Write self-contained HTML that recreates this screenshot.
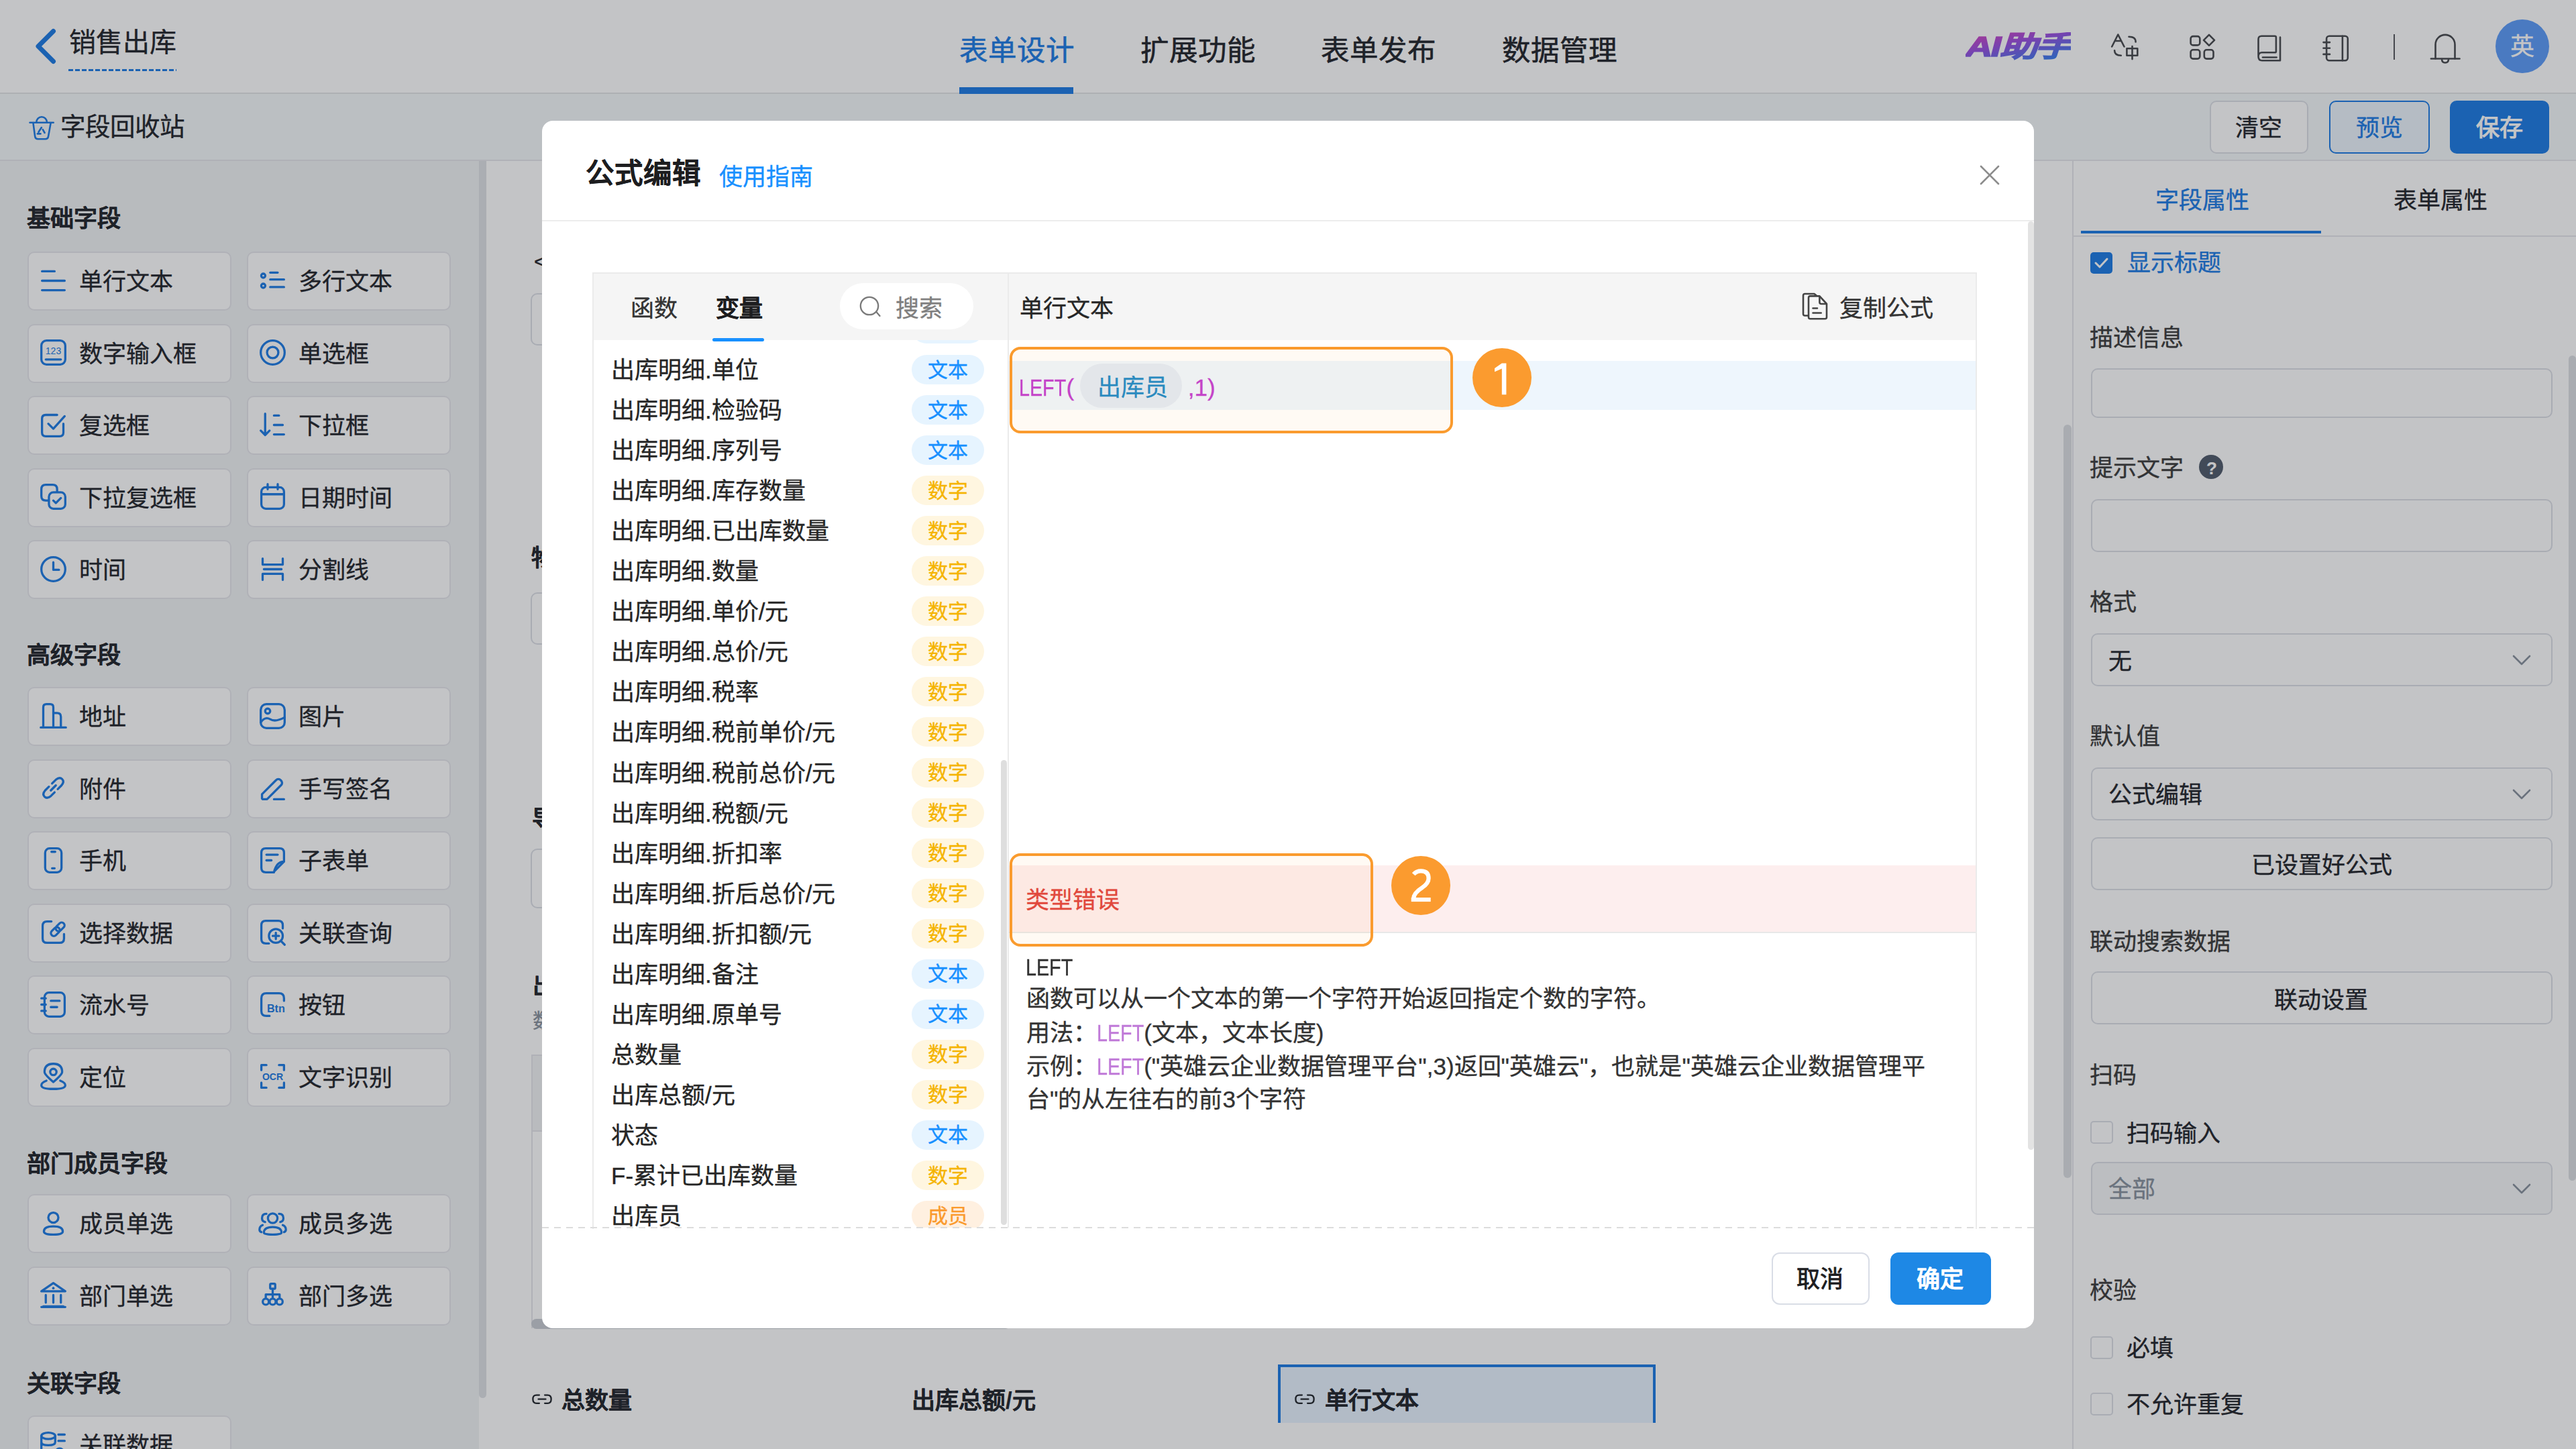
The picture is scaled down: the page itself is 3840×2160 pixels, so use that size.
<!DOCTYPE html><html lang="zh-CN"><head><meta charset="utf-8"><style>
html,body{margin:0;padding:0;width:3840px;height:2160px;overflow:hidden;background:#fff;}
body{font-family:"Liberation Sans",sans-serif;position:relative;}
.t{position:absolute;white-space:nowrap;line-height:1;-webkit-text-stroke:0.35px currentColor;}
.n{display:inline-block;transform-origin:0 50%;}
.r{position:absolute;box-sizing:border-box;}
</style></head><body>
<div class="r" style="left:0px;top:0px;width:3840px;height:138px;background:#ffffff;"></div>
<div class="r" style="left:0px;top:138px;width:3840px;height:2px;background:#e3e4e6;"></div>
<svg class="r" style="left:40px;top:35px;" width="60" height="70" viewBox="0 0 60 70" fill="none"><polyline points="39.5,11.5 17,34 39.5,56.5" stroke="#1b7ae4" stroke-width="7" stroke-linecap="round" stroke-linejoin="round"/></svg>
<div class="t" style="left:103px;top:43.0px;font-size:40px;color:#1f2329;font-weight:400;">销售出库</div>
<div class="r" style="left:102px;top:103px;width:161px;height:3px;background:repeating-linear-gradient(90deg,#1b7ae4 0 7px,transparent 7px 10px);"></div>
<div class="t" style="left:1430px;top:54.75px;font-size:42.5px;color:#1b7ae4;font-weight:400;-webkit-text-stroke:0.6px currentColor;">表单设计</div>
<div class="r" style="left:1430px;top:130px;width:170px;height:10px;background:#1b7ae4;"></div>
<div class="t" style="left:1700px;top:54.75px;font-size:42.5px;color:#1f2329;font-weight:400;-webkit-text-stroke:0.6px currentColor;">扩展功能</div>
<div class="t" style="left:1969px;top:54.75px;font-size:42.5px;color:#1f2329;font-weight:400;-webkit-text-stroke:0.6px currentColor;">表单发布</div>
<div class="t" style="left:2239px;top:54.75px;font-size:42.5px;color:#1f2329;font-weight:400;-webkit-text-stroke:0.6px currentColor;">数据管理</div>
<div class="t" style="left:2930px;top:48px;font-size:43px;font-weight:900;font-style:italic;letter-spacing:-2px;transform:scaleX(1.3);transform-origin:0 0;-webkit-text-stroke:1.6px transparent;background:linear-gradient(165deg,#e040b8 0%,#9a4ee0 40%,#3d78ee 85%);-webkit-background-clip:text;background-clip:text;color:transparent;">AI助手</div>
<svg class="r" style="left:3146px;top:50px;" width="44" height="42" viewBox="0 0 44 42" fill="none"><path d="M2.2 19.5 L11.3 1.5 L20.5 19.5 M6.6 11 H16" stroke="#45474c" stroke-width="2.6" stroke-linecap="round" stroke-linejoin="round"/><path d="M27.5 4.8 Q37.6 4.8 37.6 12.5" stroke="#45474c" stroke-width="2.6" stroke-linecap="round" stroke-linejoin="round"/><path d="M6.1 25.3 Q6.1 32.7 15.8 32.7" stroke="#45474c" stroke-width="2.6" stroke-linecap="round" stroke-linejoin="round"/><rect x="24.4" y="22.2" width="15.9" height="10.5" stroke="#45474c" stroke-width="2.6" stroke-linecap="round" stroke-linejoin="round" stroke-linecap="butt" stroke-linejoin="miter"/><path d="M32.5 19.1 V38.1" stroke="#45474c" stroke-width="2.6" stroke-linecap="round" stroke-linejoin="round"/></svg>
<svg class="r" style="left:3262px;top:50px;" width="44" height="42" viewBox="0 0 44 42" fill="none"><rect x="3.6" y="4.1" width="13.7" height="13.3" rx="3.5" stroke="#45474c" stroke-width="2.6" stroke-linecap="round" stroke-linejoin="round"/><rect x="3.6" y="24.3" width="13.7" height="13.3" rx="3.5" stroke="#45474c" stroke-width="2.6" stroke-linecap="round" stroke-linejoin="round"/><rect x="23.8" y="24.3" width="13.7" height="13.3" rx="3.5" stroke="#45474c" stroke-width="2.6" stroke-linecap="round" stroke-linejoin="round"/><path d="M31 1.8 L39 9.8 L31 17.8 L23 9.8 Z" stroke="#45474c" stroke-width="2.6" stroke-linecap="round" stroke-linejoin="round"/></svg>
<svg class="r" style="left:3362px;top:50px;" width="44" height="44" viewBox="0 0 44 44" fill="none"><path d="M4.5 34 V8.5 Q4.5 3.8 9.2 3.8 H29 Q30.9 3.8 30.9 5.7 V26.4 Q30.9 28.3 29 28.3 H10 Q4.5 28.3 4.5 34.2 Q4.5 40.2 10 40.2 H37 V5.5" stroke="#45474c" stroke-width="2.6" stroke-linecap="round" stroke-linejoin="round"/><path d="M11 35.5 H31.6" stroke="#45474c" stroke-width="2.6" stroke-linecap="round" stroke-linejoin="round"/></svg>
<svg class="r" style="left:3460px;top:50px;" width="44" height="44" viewBox="0 0 44 44" fill="none"><rect x="8.1" y="3.8" width="31.7" height="36.4" rx="4" stroke="#45474c" stroke-width="2.6" stroke-linecap="round" stroke-linejoin="round"/><path d="M31.9 3.8 V40.2" stroke="#45474c" stroke-width="2.6" stroke-linecap="round" stroke-linejoin="round"/><path d="M3.5 13.1 H13 M3.5 21.7 H13 M3.5 30.9 H13" stroke="#45474c" stroke-width="2.6" stroke-linecap="round" stroke-linejoin="round"/></svg>
<div class="r" style="left:3568px;top:51px;width:2px;height:38px;background:#55575c;"></div>
<svg class="r" style="left:3620px;top:49px;" width="50" height="48" viewBox="0 0 50 48" fill="none"><path d="M10.5 38.5 V17.4 A14.5 14.5 0 0 1 39.5 17.4 V38.5" stroke="#45474c" stroke-width="2.6" stroke-linecap="round" stroke-linejoin="round"/><path d="M3.9 38.5 H46.5" stroke="#45474c" stroke-width="2.6" stroke-linecap="round" stroke-linejoin="round"/><path d="M20 39 Q20 44.5 25 44.5 Q30 44.5 30 39" stroke="#45474c" stroke-width="2.6" stroke-linecap="round" stroke-linejoin="round"/></svg>
<div class="r" style="left:3720px;top:29px;width:80px;height:80px;border-radius:50%;background:#5a9af8;"></div>
<div class="t" style="left:3742px;top:51.5px;font-size:36px;color:#ffffff;font-weight:400;">英</div>
<div class="r" style="left:0px;top:140px;width:3840px;height:98px;background:#f5f8fa;"></div>
<div class="r" style="left:0px;top:238px;width:3840px;height:2px;background:#e5e6eb;"></div>
<svg class="r" style="left:42px;top:170px;" width="40" height="42" viewBox="0 0 40 42" fill="none"><path d="M2.5 12.8 H37.7" stroke="#1b7ae4" stroke-width="2.6" stroke-linecap="round"/><path d="M12.2 12.8 A7.9 8.6 0 0 1 28 12.8" stroke="#1b7ae4" stroke-width="2.6"/><path d="M7.5 13.6 L10.2 33.5 Q10.7 37.2 14.5 37.2 H25.7 Q29.5 37.2 30 33.5 L33.6 13.6" stroke="#1b7ae4" stroke-width="2.6" stroke-linejoin="round"/><path d="M19.9 20 L15.5 26.8 M13.8 29.4 H18.5 M21.8 23.2 L24.6 28" stroke="#1b7ae4" stroke-width="2.6" stroke-linecap="round"/></svg>
<div class="t" style="left:90px;top:171.25px;font-size:37.5px;color:#1f2329;font-weight:400;">字段回收站</div>
<div class="r" style="left:3294px;top:150px;width:147px;height:79px;border:2px solid #dcdfe6;border-radius:10px;background:#fff;"></div>
<div class="t" style="left:3332px;top:172.5px;font-size:35px;color:#1f2329;font-weight:400;">清空</div>
<div class="r" style="left:3472px;top:150px;width:150px;height:79px;border:2px solid #1b7ae4;border-radius:10px;background:#ecf4fd;"></div>
<div class="t" style="left:3512px;top:172.5px;font-size:35px;color:#1b7ae4;font-weight:400;">预览</div>
<div class="r" style="left:3652px;top:150px;width:148px;height:79px;border-radius:10px;background:#1b7ae4;"></div>
<div class="t" style="left:3691px;top:172.5px;font-size:35px;color:#ffffff;font-weight:400;-webkit-text-stroke:1.2px currentColor;">保存</div>
<div class="r" style="left:0px;top:240px;width:714px;height:1920px;background:#f1f3f5;"></div>
<div class="r" style="left:714px;top:240px;width:11px;height:1844px;background:#dfe1e5;border-radius:0 0 6px 6px;"></div>
<div class="t" style="left:40px;top:307.5px;font-size:35px;color:#1f2329;font-weight:700;-webkit-text-stroke:0.1px currentColor;">基础字段</div>
<div class="r" style="left:41px;top:375.0px;width:304px;height:88px;border:2px solid #e5e6eb;border-radius:10px;background:#ffffff;"></div>
<svg class="r" style="left:56.5px;top:395.5px;" width="45" height="45" viewBox="0 0 24 24" fill="none"><path d="M3 4.5 H13 M3 12 H21 M3 19.5 H21" stroke="#1b7ae4" stroke-width="1.75" stroke-linecap="round" stroke-linejoin="round"/></svg>
<div class="t" style="left:118px;top:402.0px;font-size:35px;color:#1f2329;font-weight:400;">单行文本</div>
<div class="r" style="left:368px;top:375.0px;width:304px;height:88px;border:2px solid #e5e6eb;border-radius:10px;background:#ffffff;"></div>
<svg class="r" style="left:383.5px;top:395.5px;" width="45" height="45" viewBox="0 0 24 24" fill="none"><circle cx="4.5" cy="8" r="1.6" stroke="#1b7ae4" stroke-width="1.75" stroke-linecap="round" stroke-linejoin="round"/><circle cx="4.5" cy="16" r="1.6" stroke="#1b7ae4" stroke-width="1.75" stroke-linecap="round" stroke-linejoin="round"/><path d="M10 5.5 H16 M10 11 H21 M10 17 H21" stroke="#1b7ae4" stroke-width="1.75" stroke-linecap="round" stroke-linejoin="round"/></svg>
<div class="t" style="left:445px;top:402.0px;font-size:35px;color:#1f2329;font-weight:400;">多行文本</div>
<div class="r" style="left:41px;top:482.5px;width:304px;height:88px;border:2px solid #e5e6eb;border-radius:10px;background:#ffffff;"></div>
<svg class="r" style="left:56.5px;top:503.0px;" width="45" height="45" viewBox="0 0 24 24" fill="none"><rect x="2.5" y="2.5" width="19" height="19" rx="4" stroke="#1b7ae4" stroke-width="1.75" stroke-linecap="round" stroke-linejoin="round"/><path d="M6 17.5 H18" stroke="#1b7ae4" stroke-width="1.75" stroke-linecap="round" stroke-linejoin="round"/><text x="12" y="13.5" font-size="7.5" text-anchor="middle" fill="#1b7ae4" font-family="Liberation Sans">123</text></svg>
<div class="t" style="left:118px;top:509.5px;font-size:35px;color:#1f2329;font-weight:400;">数字输入框</div>
<div class="r" style="left:368px;top:482.5px;width:304px;height:88px;border:2px solid #e5e6eb;border-radius:10px;background:#ffffff;"></div>
<svg class="r" style="left:383.5px;top:503.0px;" width="45" height="45" viewBox="0 0 24 24" fill="none"><circle cx="12" cy="12" r="9.5" stroke="#1b7ae4" stroke-width="1.75" stroke-linecap="round" stroke-linejoin="round"/><circle cx="12" cy="12" r="4.5" stroke="#1b7ae4" stroke-width="1.75" stroke-linecap="round" stroke-linejoin="round"/></svg>
<div class="t" style="left:445px;top:509.5px;font-size:35px;color:#1f2329;font-weight:400;">单选框</div>
<div class="r" style="left:41px;top:590.0px;width:304px;height:88px;border:2px solid #e5e6eb;border-radius:10px;background:#ffffff;"></div>
<svg class="r" style="left:56.5px;top:610.5px;" width="45" height="45" viewBox="0 0 24 24" fill="none"><path d="M20 11 V18 Q20 21 17 21 H6 Q3 21 3 18 V7 Q3 4 6 4 H15" stroke="#1b7ae4" stroke-width="1.75" stroke-linecap="round" stroke-linejoin="round"/><path d="M8 11 L12 15 L21 5" stroke="#1b7ae4" stroke-width="1.75" stroke-linecap="round" stroke-linejoin="round"/></svg>
<div class="t" style="left:118px;top:617.0px;font-size:35px;color:#1f2329;font-weight:400;">复选框</div>
<div class="r" style="left:368px;top:590.0px;width:304px;height:88px;border:2px solid #e5e6eb;border-radius:10px;background:#ffffff;"></div>
<svg class="r" style="left:383.5px;top:610.5px;" width="45" height="45" viewBox="0 0 24 24" fill="none"><path d="M6 3 V20 M2.5 16.5 L6 20 L9.5 16.5" stroke="#1b7ae4" stroke-width="1.75" stroke-linecap="round" stroke-linejoin="round"/><path d="M13 4.5 H17 M13 12 H20 M13 19.5 H21" stroke="#1b7ae4" stroke-width="1.75" stroke-linecap="round" stroke-linejoin="round"/></svg>
<div class="t" style="left:445px;top:617.0px;font-size:35px;color:#1f2329;font-weight:400;">下拉框</div>
<div class="r" style="left:41px;top:697.5px;width:304px;height:88px;border:2px solid #e5e6eb;border-radius:10px;background:#ffffff;"></div>
<svg class="r" style="left:56.5px;top:718.0px;" width="45" height="45" viewBox="0 0 24 24" fill="none"><path d="M15 8 V6 Q15 2.5 11.5 2.5 H6 Q2.5 2.5 2.5 6 V11.5 Q2.5 15 6 15 H8" stroke="#1b7ae4" stroke-width="1.75" stroke-linecap="round" stroke-linejoin="round"/><rect x="8.5" y="8.5" width="13" height="13" rx="3.5" stroke="#1b7ae4" stroke-width="1.75" stroke-linecap="round" stroke-linejoin="round"/><path d="M12 15 L14 17 L18 13" stroke="#1b7ae4" stroke-width="1.75" stroke-linecap="round" stroke-linejoin="round"/></svg>
<div class="t" style="left:118px;top:724.5px;font-size:35px;color:#1f2329;font-weight:400;">下拉复选框</div>
<div class="r" style="left:368px;top:697.5px;width:304px;height:88px;border:2px solid #e5e6eb;border-radius:10px;background:#ffffff;"></div>
<svg class="r" style="left:383.5px;top:718.0px;" width="45" height="45" viewBox="0 0 24 24" fill="none"><rect x="3" y="4.5" width="18" height="17" rx="3.5" stroke="#1b7ae4" stroke-width="1.75" stroke-linecap="round" stroke-linejoin="round"/><path d="M3 10 H21 M8 2 V6 M16 2 V6" stroke="#1b7ae4" stroke-width="1.75" stroke-linecap="round" stroke-linejoin="round"/></svg>
<div class="t" style="left:445px;top:724.5px;font-size:35px;color:#1f2329;font-weight:400;">日期时间</div>
<div class="r" style="left:41px;top:805.0px;width:304px;height:88px;border:2px solid #e5e6eb;border-radius:10px;background:#ffffff;"></div>
<svg class="r" style="left:56.5px;top:825.5px;" width="45" height="45" viewBox="0 0 24 24" fill="none"><circle cx="12" cy="12" r="9.5" stroke="#1b7ae4" stroke-width="1.75" stroke-linecap="round" stroke-linejoin="round"/><path d="M12 6.5 V12.5 H16.5" stroke="#1b7ae4" stroke-width="1.75" stroke-linecap="round" stroke-linejoin="round"/></svg>
<div class="t" style="left:118px;top:832.0px;font-size:35px;color:#1f2329;font-weight:400;">时间</div>
<div class="r" style="left:368px;top:805.0px;width:304px;height:88px;border:2px solid #e5e6eb;border-radius:10px;background:#ffffff;"></div>
<svg class="r" style="left:383.5px;top:825.5px;" width="45" height="45" viewBox="0 0 24 24" fill="none"><path d="M4 3.5 V8.3 H20 V3.5 M4 20.5 V15.7 H20 V20.5 M5 12 H19" stroke="#1b7ae4" stroke-width="1.75" stroke-linecap="round" stroke-linejoin="round"/></svg>
<div class="t" style="left:445px;top:832.0px;font-size:35px;color:#1f2329;font-weight:400;">分割线</div>
<div class="t" style="left:40px;top:959.0px;font-size:35px;color:#1f2329;font-weight:700;-webkit-text-stroke:0.1px currentColor;">高级字段</div>
<div class="r" style="left:41px;top:1024.0px;width:304px;height:88px;border:2px solid #e5e6eb;border-radius:10px;background:#ffffff;"></div>
<svg class="r" style="left:56.5px;top:1044.5px;" width="45" height="45" viewBox="0 0 24 24" fill="none"><path d="M2 21 H22 M4 21 V5 Q4 2.5 6.5 2.5 H9.5 Q12 2.5 12 5 V21 M12 9.5 H15 Q18 9.5 18 12.5 V21" stroke="#1b7ae4" stroke-width="1.75" stroke-linecap="round" stroke-linejoin="round"/></svg>
<div class="t" style="left:118px;top:1051.0px;font-size:35px;color:#1f2329;font-weight:400;">地址</div>
<div class="r" style="left:368px;top:1024.0px;width:304px;height:88px;border:2px solid #e5e6eb;border-radius:10px;background:#ffffff;"></div>
<svg class="r" style="left:383.5px;top:1044.5px;" width="45" height="45" viewBox="0 0 24 24" fill="none"><rect x="2.5" y="2.5" width="19" height="19" rx="4.5" stroke="#1b7ae4" stroke-width="1.75" stroke-linecap="round" stroke-linejoin="round"/><circle cx="8" cy="8" r="2" stroke="#1b7ae4" stroke-width="1.75" stroke-linecap="round" stroke-linejoin="round"/><path d="M2.5 17 Q6 12 10 14.5 T21.5 13" stroke="#1b7ae4" stroke-width="1.75" stroke-linecap="round" stroke-linejoin="round"/></svg>
<div class="t" style="left:445px;top:1051.0px;font-size:35px;color:#1f2329;font-weight:400;">图片</div>
<div class="r" style="left:41px;top:1131.5px;width:304px;height:88px;border:2px solid #e5e6eb;border-radius:10px;background:#ffffff;"></div>
<svg class="r" style="left:56.5px;top:1152.0px;" width="45" height="45" viewBox="0 0 24 24" fill="none"><path d="M10 14 L14 10 M8.5 11 L5.5 14 Q3 17 5 19 Q7 21 10 18.5 L13 15.5 M11 8.5 L14 5.5 Q17 3 19 5 Q21 7 18.5 10 L15.5 13" stroke="#1b7ae4" stroke-width="1.75" stroke-linecap="round" stroke-linejoin="round"/></svg>
<div class="t" style="left:118px;top:1158.5px;font-size:35px;color:#1f2329;font-weight:400;">附件</div>
<div class="r" style="left:368px;top:1131.5px;width:304px;height:88px;border:2px solid #e5e6eb;border-radius:10px;background:#ffffff;"></div>
<svg class="r" style="left:383.5px;top:1152.0px;" width="45" height="45" viewBox="0 0 24 24" fill="none"><path d="M3.5 20.5 V17 L14.5 6 Q16.5 4 18.5 6 Q20.5 8 18.5 10 L7.5 21 H4 M13 21 H21" stroke="#1b7ae4" stroke-width="1.75" stroke-linecap="round" stroke-linejoin="round"/></svg>
<div class="t" style="left:445px;top:1158.5px;font-size:35px;color:#1f2329;font-weight:400;">手写签名</div>
<div class="r" style="left:41px;top:1239.0px;width:304px;height:88px;border:2px solid #e5e6eb;border-radius:10px;background:#ffffff;"></div>
<svg class="r" style="left:56.5px;top:1259.5px;" width="45" height="45" viewBox="0 0 24 24" fill="none"><rect x="5.5" y="2.5" width="13" height="19" rx="3.5" stroke="#1b7ae4" stroke-width="1.75" stroke-linecap="round" stroke-linejoin="round"/><path d="M10.5 5.2 H13.5 M11 18.3 H13" stroke="#1b7ae4" stroke-width="1.75" stroke-linecap="round" stroke-linejoin="round"/></svg>
<div class="t" style="left:118px;top:1266.0px;font-size:35px;color:#1f2329;font-weight:400;">手机</div>
<div class="r" style="left:368px;top:1239.0px;width:304px;height:88px;border:2px solid #e5e6eb;border-radius:10px;background:#ffffff;"></div>
<svg class="r" style="left:383.5px;top:1259.5px;" width="45" height="45" viewBox="0 0 24 24" fill="none"><path d="M21 13 V6 Q21 2.5 17.5 2.5 H6.5 Q3 2.5 3 6 V18 Q3 21.5 6.5 21.5 H12.5 Z M21 13 Q15 13 13 21.5" stroke="#1b7ae4" stroke-width="1.75" stroke-linecap="round" stroke-linejoin="round"/><path d="M7 7.5 H16 M7 12 H11" stroke="#1b7ae4" stroke-width="1.75" stroke-linecap="round" stroke-linejoin="round"/></svg>
<div class="t" style="left:445px;top:1266.0px;font-size:35px;color:#1f2329;font-weight:400;">子表单</div>
<div class="r" style="left:41px;top:1346.5px;width:304px;height:88px;border:2px solid #e5e6eb;border-radius:10px;background:#ffffff;"></div>
<svg class="r" style="left:56.5px;top:1367.0px;" width="45" height="45" viewBox="0 0 24 24" fill="none"><path d="M10.5 3.5 H7 Q3.5 3.5 3.5 7 V17 Q3.5 20.5 7 20.5 H17 Q20.5 20.5 20.5 17 V13.5" stroke="#1b7ae4" stroke-width="1.75" stroke-linecap="round" stroke-linejoin="round"/><rect x="9.6" y="9.3" width="8" height="4.6" rx="2.3" transform="rotate(-45 13.6 11.6)" stroke="#1b7ae4" stroke-width="1.75" stroke-linecap="round" stroke-linejoin="round"/><rect x="13.4" y="5.5" width="8" height="4.6" rx="2.3" transform="rotate(-45 17.4 7.8)" stroke="#1b7ae4" stroke-width="1.75" stroke-linecap="round" stroke-linejoin="round"/></svg>
<div class="t" style="left:118px;top:1373.5px;font-size:35px;color:#1f2329;font-weight:400;">选择数据</div>
<div class="r" style="left:368px;top:1346.5px;width:304px;height:88px;border:2px solid #e5e6eb;border-radius:10px;background:#ffffff;"></div>
<svg class="r" style="left:383.5px;top:1367.0px;" width="45" height="45" viewBox="0 0 24 24" fill="none"><path d="M20 9 V6.5 Q20 3 16.5 3 H6.5 Q3 3 3 6.5 V17.5 Q3 21 6.5 21 H9" stroke="#1b7ae4" stroke-width="1.75" stroke-linecap="round" stroke-linejoin="round"/><circle cx="14.5" cy="15" r="5.5" stroke="#1b7ae4" stroke-width="1.75" stroke-linecap="round" stroke-linejoin="round"/><path d="M14.5 12.5 V17.5 M12 15 H17 M18.5 19 L21.5 22" stroke="#1b7ae4" stroke-width="1.75" stroke-linecap="round" stroke-linejoin="round"/></svg>
<div class="t" style="left:445px;top:1373.5px;font-size:35px;color:#1f2329;font-weight:400;">关联查询</div>
<div class="r" style="left:41px;top:1454.0px;width:304px;height:88px;border:2px solid #e5e6eb;border-radius:10px;background:#ffffff;"></div>
<svg class="r" style="left:56.5px;top:1474.5px;" width="45" height="45" viewBox="0 0 24 24" fill="none"><rect x="5" y="2.5" width="16" height="19" rx="3.5" stroke="#1b7ae4" stroke-width="1.75" stroke-linecap="round" stroke-linejoin="round"/><path d="M2.5 7 H6 M2.5 12 H6 M2.5 17 H6 M10 9 H17 M10 14 H15" stroke="#1b7ae4" stroke-width="1.75" stroke-linecap="round" stroke-linejoin="round"/></svg>
<div class="t" style="left:118px;top:1481.0px;font-size:35px;color:#1f2329;font-weight:400;">流水号</div>
<div class="r" style="left:368px;top:1454.0px;width:304px;height:88px;border:2px solid #e5e6eb;border-radius:10px;background:#ffffff;"></div>
<svg class="r" style="left:383.5px;top:1474.5px;" width="45" height="45" viewBox="0 0 24 24" fill="none"><path d="M9.5 21 H7 Q3 21 3 17 V7 Q3 3 7 3 H17 Q21 3 21 7 V9" stroke="#1b7ae4" stroke-width="1.75" stroke-linecap="round" stroke-linejoin="round"/><text x="14.6" y="18.2" font-size="8.6" font-weight="bold" text-anchor="middle" fill="#1b7ae4" font-family="Liberation Sans">Btn</text></svg>
<div class="t" style="left:445px;top:1481.0px;font-size:35px;color:#1f2329;font-weight:400;">按钮</div>
<div class="r" style="left:41px;top:1561.5px;width:304px;height:88px;border:2px solid #e5e6eb;border-radius:10px;background:#ffffff;"></div>
<svg class="r" style="left:56.5px;top:1582.0px;" width="45" height="45" viewBox="0 0 24 24" fill="none"><path d="M12 16.5 Q5 10.5 5 8.5 Q5 2 12 2 Q19 2 19 8.5 Q19 10.5 12 16.5 Z" stroke="#1b7ae4" stroke-width="1.75" stroke-linecap="round" stroke-linejoin="round"/><circle cx="12" cy="8.5" r="2.5" stroke="#1b7ae4" stroke-width="1.75" stroke-linecap="round" stroke-linejoin="round"/><path d="M6.5 15.5 Q2.5 17 2.5 19 Q2.5 22 12 22 Q21.5 22 21.5 19 Q21.5 17 17.5 15.5" stroke="#1b7ae4" stroke-width="1.75" stroke-linecap="round" stroke-linejoin="round"/></svg>
<div class="t" style="left:118px;top:1588.5px;font-size:35px;color:#1f2329;font-weight:400;">定位</div>
<div class="r" style="left:368px;top:1561.5px;width:304px;height:88px;border:2px solid #e5e6eb;border-radius:10px;background:#ffffff;"></div>
<svg class="r" style="left:383.5px;top:1582.0px;" width="45" height="45" viewBox="0 0 24 24" fill="none"><path d="M3 7 V3 H7 M17 3 H21 V7 M21 17 V21 H17 M7 21 H3 V17" stroke="#1b7ae4" stroke-width="1.75" stroke-linecap="round" stroke-linejoin="round"/><text x="12" y="15" font-size="7.5" font-weight="bold" text-anchor="middle" fill="#1b7ae4" font-family="Liberation Sans">OCR</text></svg>
<div class="t" style="left:445px;top:1588.5px;font-size:35px;color:#1f2329;font-weight:400;">文字识别</div>
<div class="t" style="left:40px;top:1716.5px;font-size:35px;color:#1f2329;font-weight:700;-webkit-text-stroke:0.1px currentColor;">部门成员字段</div>
<div class="r" style="left:41px;top:1780.0px;width:304px;height:88px;border:2px solid #e5e6eb;border-radius:10px;background:#ffffff;"></div>
<svg class="r" style="left:56.5px;top:1800.5px;" width="45" height="45" viewBox="0 0 24 24" fill="none"><circle cx="12" cy="7.5" r="4" stroke="#1b7ae4" stroke-width="1.75" stroke-linecap="round" stroke-linejoin="round"/><path d="M4.5 18.5 Q4.5 14.5 12 14.5 Q19.5 14.5 19.5 18.5 Q19.5 21 12 21 Q4.5 21 4.5 18.5 Z" stroke="#1b7ae4" stroke-width="1.75" stroke-linecap="round" stroke-linejoin="round"/></svg>
<div class="t" style="left:118px;top:1807.0px;font-size:35px;color:#1f2329;font-weight:400;">成员单选</div>
<div class="r" style="left:368px;top:1780.0px;width:304px;height:88px;border:2px solid #e5e6eb;border-radius:10px;background:#ffffff;"></div>
<svg class="r" style="left:383.5px;top:1800.5px;" width="45" height="45" viewBox="0 0 24 24" fill="none"><circle cx="12" cy="8" r="3.8" stroke="#1b7ae4" stroke-width="1.75" stroke-linecap="round" stroke-linejoin="round"/><path d="M5 19.5 Q5 15 12 15 Q19 15 19 19.5 Q19 21 12 21 Q5 21 5 19.5 Z M7 4.5 Q3.5 4.5 3.5 8 Q3.5 10.5 6 11 M17 4.5 Q20.5 4.5 20.5 8 Q20.5 10.5 18 11 M4 13.5 Q1.5 14.5 1.5 17 Q1.5 18.5 3 19 M20 13.5 Q22.5 14.5 22.5 17 Q22.5 18.5 21 19" stroke="#1b7ae4" stroke-width="1.75" stroke-linecap="round" stroke-linejoin="round"/></svg>
<div class="t" style="left:445px;top:1807.0px;font-size:35px;color:#1f2329;font-weight:400;">成员多选</div>
<div class="r" style="left:41px;top:1887.5px;width:304px;height:88px;border:2px solid #e5e6eb;border-radius:10px;background:#ffffff;"></div>
<svg class="r" style="left:56.5px;top:1908.0px;" width="45" height="45" viewBox="0 0 24 24" fill="none"><path d="M2.5 9 L12 2.5 L21.5 9 Z M4 21 H20 M2.5 21.5 H21.5 M6 12 V18 M12 12 V18 M18 12 V18" stroke="#1b7ae4" stroke-width="1.75" stroke-linecap="round" stroke-linejoin="round"/><circle cx="12" cy="6.5" r="1" fill="#1b7ae4"/></svg>
<div class="t" style="left:118px;top:1914.5px;font-size:35px;color:#1f2329;font-weight:400;">部门单选</div>
<div class="r" style="left:368px;top:1887.5px;width:304px;height:88px;border:2px solid #e5e6eb;border-radius:10px;background:#ffffff;"></div>
<svg class="r" style="left:383.5px;top:1908.0px;" width="45" height="45" viewBox="0 0 24 24" fill="none"><rect x="10" y="3" width="4" height="4" rx="0.8" stroke="#1b7ae4" stroke-width="1.75" stroke-linecap="round" stroke-linejoin="round"/><path d="M12 7 V10.5 M6.5 14 V11.5 H17.5 V14 M12 10.5 V14" stroke="#1b7ae4" stroke-width="1.75" stroke-linecap="round" stroke-linejoin="round"/><circle cx="6.5" cy="17.3" r="2.4" stroke="#1b7ae4" stroke-width="1.75" stroke-linecap="round" stroke-linejoin="round"/><circle cx="12" cy="17.3" r="2.4" stroke="#1b7ae4" stroke-width="1.75" stroke-linecap="round" stroke-linejoin="round"/><circle cx="17.5" cy="17.3" r="2.4" stroke="#1b7ae4" stroke-width="1.75" stroke-linecap="round" stroke-linejoin="round"/></svg>
<div class="t" style="left:445px;top:1914.5px;font-size:35px;color:#1f2329;font-weight:400;">部门多选</div>
<div class="t" style="left:40px;top:2044.5px;font-size:35px;color:#1f2329;font-weight:700;-webkit-text-stroke:0.1px currentColor;">关联字段</div>
<div class="r" style="left:41px;top:2110px;width:304px;height:88px;border:2px solid #e5e6eb;border-radius:10px;background:#ffffff;"></div>
<svg class="r" style="left:56.5px;top:2130.5px;" width="45" height="45" viewBox="0 0 24 24" fill="none"><ellipse cx="8" cy="5" rx="5.5" ry="2.5" stroke="#1b7ae4" stroke-width="1.75" stroke-linecap="round" stroke-linejoin="round"/><path d="M2.5 5 V15 Q2.5 17.5 8 17.5 M2.5 10 Q2.5 12.5 8 12.5 Q13.5 12.5 13.5 10 V5 M16 4 H21 M16 9 H21" stroke="#1b7ae4" stroke-width="1.75" stroke-linecap="round" stroke-linejoin="round"/><circle cx="17" cy="18" r="3" stroke="#1b7ae4" stroke-width="1.75" stroke-linecap="round" stroke-linejoin="round"/></svg>
<div class="t" style="left:118px;top:2137.0px;font-size:35px;color:#1f2329;font-weight:400;">关联数据</div>
<div class="r" style="left:725px;top:240px;width:2364px;height:1920px;background:#ffffff;"></div>
<div class="t" style="left:796px;top:374.5px;font-size:30px;color:#1f2329;font-weight:400;">&lt;</div>
<div class="r" style="left:791px;top:437px;width:400px;height:78px;border:2px solid #dcdfe6;border-radius:10px;"></div>
<div class="t" style="left:792px;top:814.0px;font-size:35px;color:#1f2329;font-weight:700;-webkit-text-stroke:0.1px currentColor;">物料</div>
<div class="r" style="left:791px;top:883px;width:400px;height:78px;border:2px solid #dcdfe6;border-radius:10px;"></div>
<div class="t" style="left:793px;top:1203.0px;font-size:35px;color:#1f2329;font-weight:700;-webkit-text-stroke:0.1px currentColor;">导入</div>
<div class="r" style="left:791px;top:1265px;width:400px;height:89px;border:2px solid #dcdfe6;border-radius:10px;"></div>
<div class="t" style="left:794px;top:1452.0px;font-size:35px;color:#1f2329;font-weight:700;-webkit-text-stroke:0.1px currentColor;">出库明细</div>
<div class="t" style="left:794px;top:1507.0px;font-size:30px;color:#86909c;font-weight:400;">数据</div>
<div class="r" style="left:792px;top:1572px;width:1400px;height:408px;border-left:2px solid #e5e6eb;border-top:2px solid #e5e6eb;background:#fff;"></div>
<div class="r" style="left:794px;top:1574px;width:1406px;height:111px;background:#f2f3f5;"></div>
<div class="r" style="left:794px;top:1685px;width:1406px;height:2px;background:#e5e6eb;"></div>
<div class="r" style="left:792px;top:1966px;width:714px;height:15px;background:#c9cdd4;border-radius:8px;"></div>
<svg class="r" style="left:791px;top:2070px;" width="34" height="30" viewBox="0 0 24 22" fill="none"><path d="M9 7 H6 Q2 7 2 11.5 Q2 16 6 16 H9 M15 7 H18 Q22 7 22 11.5 Q22 16 18 16 H15 M8 11.5 H16" stroke="#1f2329" stroke-width="1.7" stroke-linecap="round"/></svg>
<div class="t" style="left:837px;top:2070.0px;font-size:35px;color:#1f2329;font-weight:700;-webkit-text-stroke:0.1px currentColor;">总数量</div>
<div class="t" style="left:1359px;top:2070.0px;font-size:35px;color:#1f2329;font-weight:700;-webkit-text-stroke:0.1px currentColor;">出库总额/元</div>
<div class="r" style="left:1905px;top:2034px;width:563px;height:87px;border:4px solid #1b7ae4;border-bottom:none;background:#e8f3ff;"></div>
<svg class="r" style="left:1928px;top:2070px;" width="34" height="30" viewBox="0 0 24 22" fill="none"><path d="M9 7 H6 Q2 7 2 11.5 Q2 16 6 16 H9 M15 7 H18 Q22 7 22 11.5 Q22 16 18 16 H15 M8 11.5 H16" stroke="#1f2329" stroke-width="1.7" stroke-linecap="round"/></svg>
<div class="t" style="left:1975px;top:2070.0px;font-size:35px;color:#1f2329;font-weight:700;-webkit-text-stroke:0.1px currentColor;">单行文本</div>
<div class="r" style="left:3076px;top:633px;width:12px;height:1123px;background:#dcdfe3;border-radius:6px;"></div>
<div class="r" style="left:3089px;top:240px;width:2px;height:1920px;background:#e5e6eb;"></div>
<div class="r" style="left:3091px;top:240px;width:749px;height:1920px;background:#ffffff;"></div>
<div class="t" style="left:3213px;top:280.5px;font-size:35px;color:#1b7ae4;font-weight:400;">字段属性</div>
<div class="t" style="left:3568px;top:280.5px;font-size:35px;color:#1f2329;font-weight:400;">表单属性</div>
<div class="r" style="left:3102px;top:344px;width:358px;height:4px;background:#1b7ae4;"></div>
<div class="r" style="left:3091px;top:351px;width:749px;height:2px;background:#e5e6eb;"></div>
<div class="r" style="left:3116px;top:375.5px;width:33px;height:32px;border-radius:5px;background:#1b7ae4;"></div>
<svg class="r" style="left:3116px;top:375.5px;" width="33" height="32" viewBox="0 0 33 32" fill="none"><path d="M8 16 L14 22 L25 10" stroke="#fff" stroke-width="3" stroke-linecap="round" stroke-linejoin="round"/></svg>
<div class="t" style="left:3171px;top:374.0px;font-size:35px;color:#1b7ae4;font-weight:400;">显示标题</div>
<div class="t" style="left:3115px;top:486.0px;font-size:35px;color:#3a3a3a;font-weight:400;">描述信息</div>
<div class="r" style="left:3117px;top:549px;width:688px;height:74px;border:2px solid #dcdfe6;border-radius:10px;background:#ffffff;"></div>
<div class="t" style="left:3115px;top:680.0px;font-size:35px;color:#3a3a3a;font-weight:400;">提示文字</div>
<div class="r" style="left:3278px;top:678px;width:36px;height:36px;border-radius:50%;background:#4e5969;"></div>
<div class="t" style="left:3289px;top:684.5px;font-size:26px;color:#ffffff;font-weight:700;-webkit-text-stroke:0.1px currentColor;">?</div>
<div class="r" style="left:3117px;top:744px;width:688px;height:79px;border:2px solid #dcdfe6;border-radius:10px;background:#ffffff;"></div>
<div class="t" style="left:3115px;top:880.0px;font-size:35px;color:#3a3a3a;font-weight:400;">格式</div>
<div class="r" style="left:3117px;top:944px;width:688px;height:79px;border:2px solid #dcdfe6;border-radius:10px;background:#ffffff;"></div>
<div class="t" style="left:3143px;top:968.0px;font-size:35px;color:#1f2329;font-weight:400;">无</div>
<svg class="r" style="left:3745px;top:976px;" width="28" height="17" viewBox="0 0 28 17" fill="none"><path d="M2 2 L14 14 L26 2" stroke="#86909c" stroke-width="2.6" stroke-linecap="round" stroke-linejoin="round"/></svg>
<div class="t" style="left:3115px;top:1080.0px;font-size:35px;color:#3a3a3a;font-weight:400;">默认值</div>
<div class="r" style="left:3117px;top:1144px;width:688px;height:79px;border:2px solid #dcdfe6;border-radius:10px;background:#ffffff;"></div>
<div class="t" style="left:3143px;top:1167.0px;font-size:35px;color:#1f2329;font-weight:400;">公式编辑</div>
<svg class="r" style="left:3745px;top:1176px;" width="28" height="17" viewBox="0 0 28 17" fill="none"><path d="M2 2 L14 14 L26 2" stroke="#86909c" stroke-width="2.6" stroke-linecap="round" stroke-linejoin="round"/></svg>
<div class="r" style="left:3117px;top:1248px;width:688px;height:79px;border:2px solid #dcdfe6;border-radius:10px;background:#ffffff;"></div>
<div class="t" style="left:3356px;top:1271.5px;font-size:35px;color:#1f2329;font-weight:400;">已设置好公式</div>
<div class="t" style="left:3115px;top:1386.0px;font-size:35px;color:#3a3a3a;font-weight:400;">联动搜索数据</div>
<div class="r" style="left:3117px;top:1448px;width:688px;height:79px;border:2px solid #dcdfe6;border-radius:10px;background:#ffffff;"></div>
<div class="t" style="left:3390px;top:1473.0px;font-size:35px;color:#1f2329;font-weight:400;">联动设置</div>
<div class="t" style="left:3115px;top:1585.0px;font-size:35px;color:#3a3a3a;font-weight:400;">扫码</div>
<div class="r" style="left:3116px;top:1671px;width:34px;height:34px;border-radius:5px;border:2px solid #dcdfe6;background:#fff;"></div>
<div class="t" style="left:3170px;top:1672.0px;font-size:35px;color:#1f2329;font-weight:400;">扫码输入</div>
<div class="r" style="left:3117px;top:1732px;width:688px;height:79px;border:2px solid #dcdfe6;border-radius:10px;background:#f6f7f9;"></div>
<div class="t" style="left:3143px;top:1755.0px;font-size:35px;color:#86909c;font-weight:400;">全部</div>
<svg class="r" style="left:3745px;top:1764px;" width="28" height="17" viewBox="0 0 28 17" fill="none"><path d="M2 2 L14 14 L26 2" stroke="#86909c" stroke-width="2.6" stroke-linecap="round" stroke-linejoin="round"/></svg>
<div class="t" style="left:3115px;top:1906.0px;font-size:35px;color:#3a3a3a;font-weight:400;">校验</div>
<div class="r" style="left:3116px;top:1991.5px;width:34px;height:34px;border-radius:5px;border:2px solid #dcdfe6;background:#fff;"></div>
<div class="t" style="left:3170px;top:1992.0px;font-size:35px;color:#1f2329;font-weight:400;">必填</div>
<div class="r" style="left:3116px;top:2076px;width:34px;height:34px;border-radius:5px;border:2px solid #dcdfe6;background:#fff;"></div>
<div class="t" style="left:3170px;top:2076.0px;font-size:35px;color:#1f2329;font-weight:400;">不允许重复</div>
<div class="r" style="left:3829px;top:530px;width:11px;height:1230px;background:#dcdfe3;border-radius:6px;"></div>
<div class="r" style="left:0;top:0;width:3840px;height:2160px;background:rgba(29,33,41,0.265);"></div>
<div class="r" style="left:808px;top:180px;width:2224px;height:1800px;background:#ffffff;border-radius:16px;"></div>
<div class="t" style="left:873px;top:238.25px;font-size:42.5px;color:#1d1d1f;font-weight:700;-webkit-text-stroke:0.1px currentColor;">公式编辑</div>
<div class="t" style="left:1072px;top:245.5px;font-size:35px;color:#1890ff;font-weight:400;">使用指南</div>
<svg class="r" style="left:2950px;top:245px;" width="32" height="32" viewBox="0 0 32 32" fill="none"><path d="M3 3 L29 29 M29 3 L3 29" stroke="#8c8c8c" stroke-width="2.6" stroke-linecap="round"/></svg>
<div class="r" style="left:808px;top:328px;width:2224px;height:2px;background:#ececec;"></div>
<div class="r" style="left:3023px;top:330px;width:9px;height:1384px;background:#e3e3e3;border-radius:5px;"></div>
<div class="r" style="left:883px;top:406px;width:2064px;height:1426px;border:2px solid #ebebeb;border-bottom:none;"></div>
<div class="r" style="left:885px;top:408px;width:617px;height:99px;background:#f5f5f5;"></div>
<div class="r" style="left:1502px;top:406px;width:2px;height:1424px;background:#ebebeb;"></div>
<div class="r" style="left:1504px;top:408px;width:1441px;height:99px;background:#f5f5f5;"></div>
<div class="t" style="left:940px;top:441.5px;font-size:35px;color:#333333;font-weight:400;">函数</div>
<div class="t" style="left:1067px;top:441.5px;font-size:35px;color:#1d1d1f;font-weight:700;-webkit-text-stroke:0.1px currentColor;">变量</div>
<div class="r" style="left:1062px;top:504px;width:77px;height:5px;background:#1890ff;border-radius:3px;"></div>
<div class="r" style="left:1252px;top:422px;width:199px;height:69px;border-radius:35px;background:#ffffff;"></div>
<svg class="r" style="left:1278px;top:438px;" width="38" height="38" viewBox="0 0 38 38" fill="none"><circle cx="18" cy="18" r="13.2" stroke="#7a7a7a" stroke-width="2.3"/><path d="M28.2 26.8 L33.5 33" stroke="#7a7a7a" stroke-width="2.3" stroke-linecap="round"/></svg>
<div class="t" style="left:1335px;top:441.5px;font-size:35px;color:#7f7f7f;font-weight:400;">搜索</div>
<div class="r" style="left:885px;top:507px;width:617px;height:1323px;overflow:hidden;">
<div class="r" style="left:474px;top:-39px;width:108px;height:44px;border-radius:22px;background:#e6f4ff;"></div>
<div class="t" style="left:498px;top:-31.5px;font-size:30px;color:#1890ff;">文本</div>
<div class="t" style="left:26px;top:27.0px;font-size:35px;color:#262626;">出库明细.单位</div>
<div class="r" style="left:474px;top:22.0px;width:108px;height:44px;border-radius:22px;background:#e6f4ff;"></div>
<div class="t" style="left:498px;top:29.5px;font-size:30px;color:#1890ff;">文本</div>
<div class="t" style="left:26px;top:87.04999999999995px;font-size:35px;color:#262626;">出库明细.检验码</div>
<div class="r" style="left:474px;top:82.04999999999995px;width:108px;height:44px;border-radius:22px;background:#e6f4ff;"></div>
<div class="t" style="left:498px;top:89.54999999999995px;font-size:30px;color:#1890ff;">文本</div>
<div class="t" style="left:26px;top:147.10000000000002px;font-size:35px;color:#262626;">出库明细.序列号</div>
<div class="r" style="left:474px;top:142.10000000000002px;width:108px;height:44px;border-radius:22px;background:#e6f4ff;"></div>
<div class="t" style="left:498px;top:149.60000000000002px;font-size:30px;color:#1890ff;">文本</div>
<div class="t" style="left:26px;top:207.14999999999998px;font-size:35px;color:#262626;">出库明细.库存数量</div>
<div class="r" style="left:474px;top:202.14999999999998px;width:108px;height:44px;border-radius:22px;background:#fff6e0;"></div>
<div class="t" style="left:498px;top:209.64999999999998px;font-size:30px;color:#f5b400;">数字</div>
<div class="t" style="left:26px;top:267.20000000000005px;font-size:35px;color:#262626;">出库明细.已出库数量</div>
<div class="r" style="left:474px;top:262.20000000000005px;width:108px;height:44px;border-radius:22px;background:#fff6e0;"></div>
<div class="t" style="left:498px;top:269.70000000000005px;font-size:30px;color:#f5b400;">数字</div>
<div class="t" style="left:26px;top:327.25px;font-size:35px;color:#262626;">出库明细.数量</div>
<div class="r" style="left:474px;top:322.25px;width:108px;height:44px;border-radius:22px;background:#fff6e0;"></div>
<div class="t" style="left:498px;top:329.75px;font-size:30px;color:#f5b400;">数字</div>
<div class="t" style="left:26px;top:387.29999999999995px;font-size:35px;color:#262626;">出库明细.单价/元</div>
<div class="r" style="left:474px;top:382.29999999999995px;width:108px;height:44px;border-radius:22px;background:#fff6e0;"></div>
<div class="t" style="left:498px;top:389.79999999999995px;font-size:30px;color:#f5b400;">数字</div>
<div class="t" style="left:26px;top:447.3499999999999px;font-size:35px;color:#262626;">出库明细.总价/元</div>
<div class="r" style="left:474px;top:442.3499999999999px;width:108px;height:44px;border-radius:22px;background:#fff6e0;"></div>
<div class="t" style="left:498px;top:449.8499999999999px;font-size:30px;color:#f5b400;">数字</div>
<div class="t" style="left:26px;top:507.4000000000001px;font-size:35px;color:#262626;">出库明细.税率</div>
<div class="r" style="left:474px;top:502.4000000000001px;width:108px;height:44px;border-radius:22px;background:#fff6e0;"></div>
<div class="t" style="left:498px;top:509.9000000000001px;font-size:30px;color:#f5b400;">数字</div>
<div class="t" style="left:26px;top:567.4499999999998px;font-size:35px;color:#262626;">出库明细.税前单价/元</div>
<div class="r" style="left:474px;top:562.4499999999998px;width:108px;height:44px;border-radius:22px;background:#fff6e0;"></div>
<div class="t" style="left:498px;top:569.9499999999998px;font-size:30px;color:#f5b400;">数字</div>
<div class="t" style="left:26px;top:627.5px;font-size:35px;color:#262626;">出库明细.税前总价/元</div>
<div class="r" style="left:474px;top:622.5px;width:108px;height:44px;border-radius:22px;background:#fff6e0;"></div>
<div class="t" style="left:498px;top:630.0px;font-size:30px;color:#f5b400;">数字</div>
<div class="t" style="left:26px;top:687.55px;font-size:35px;color:#262626;">出库明细.税额/元</div>
<div class="r" style="left:474px;top:682.55px;width:108px;height:44px;border-radius:22px;background:#fff6e0;"></div>
<div class="t" style="left:498px;top:690.05px;font-size:30px;color:#f5b400;">数字</div>
<div class="t" style="left:26px;top:747.5999999999999px;font-size:35px;color:#262626;">出库明细.折扣率</div>
<div class="r" style="left:474px;top:742.5999999999999px;width:108px;height:44px;border-radius:22px;background:#fff6e0;"></div>
<div class="t" style="left:498px;top:750.0999999999999px;font-size:30px;color:#f5b400;">数字</div>
<div class="t" style="left:26px;top:807.6500000000001px;font-size:35px;color:#262626;">出库明细.折后总价/元</div>
<div class="r" style="left:474px;top:802.6500000000001px;width:108px;height:44px;border-radius:22px;background:#fff6e0;"></div>
<div class="t" style="left:498px;top:810.1500000000001px;font-size:30px;color:#f5b400;">数字</div>
<div class="t" style="left:26px;top:867.6999999999998px;font-size:35px;color:#262626;">出库明细.折扣额/元</div>
<div class="r" style="left:474px;top:862.6999999999998px;width:108px;height:44px;border-radius:22px;background:#fff6e0;"></div>
<div class="t" style="left:498px;top:870.1999999999998px;font-size:30px;color:#f5b400;">数字</div>
<div class="t" style="left:26px;top:927.75px;font-size:35px;color:#262626;">出库明细.备注</div>
<div class="r" style="left:474px;top:922.75px;width:108px;height:44px;border-radius:22px;background:#e6f4ff;"></div>
<div class="t" style="left:498px;top:930.25px;font-size:30px;color:#1890ff;">文本</div>
<div class="t" style="left:26px;top:987.8px;font-size:35px;color:#262626;">出库明细.原单号</div>
<div class="r" style="left:474px;top:982.8px;width:108px;height:44px;border-radius:22px;background:#e6f4ff;"></div>
<div class="t" style="left:498px;top:990.3px;font-size:30px;color:#1890ff;">文本</div>
<div class="t" style="left:26px;top:1047.85px;font-size:35px;color:#262626;">总数量</div>
<div class="r" style="left:474px;top:1042.85px;width:108px;height:44px;border-radius:22px;background:#fff6e0;"></div>
<div class="t" style="left:498px;top:1050.35px;font-size:30px;color:#f5b400;">数字</div>
<div class="t" style="left:26px;top:1107.8999999999999px;font-size:35px;color:#262626;">出库总额/元</div>
<div class="r" style="left:474px;top:1102.8999999999999px;width:108px;height:44px;border-radius:22px;background:#fff6e0;"></div>
<div class="t" style="left:498px;top:1110.3999999999999px;font-size:30px;color:#f5b400;">数字</div>
<div class="t" style="left:26px;top:1167.95px;font-size:35px;color:#262626;">状态</div>
<div class="r" style="left:474px;top:1162.95px;width:108px;height:44px;border-radius:22px;background:#e6f4ff;"></div>
<div class="t" style="left:498px;top:1170.45px;font-size:30px;color:#1890ff;">文本</div>
<div class="t" style="left:26px;top:1228.0px;font-size:35px;color:#262626;">F-累计已出库数量</div>
<div class="r" style="left:474px;top:1223.0px;width:108px;height:44px;border-radius:22px;background:#fff6e0;"></div>
<div class="t" style="left:498px;top:1230.5px;font-size:30px;color:#f5b400;">数字</div>
<div class="t" style="left:26px;top:1288.05px;font-size:35px;color:#262626;">出库员</div>
<div class="r" style="left:474px;top:1283.05px;width:108px;height:44px;border-radius:22px;background:#fff0e0;"></div>
<div class="t" style="left:498px;top:1290.55px;font-size:30px;color:#fa9a2c;">成员</div>
</div>
<div class="r" style="left:1492px;top:1133px;width:9px;height:693px;background:#dedede;border-radius:5px;"></div>
<div class="t" style="left:1520px;top:442.0px;font-size:35px;color:#262626;font-weight:400;">单行文本</div>
<svg class="r" style="left:2684px;top:434px;" width="44" height="46" viewBox="0 0 44 46" fill="none"><path d="M12 36.5 H6.5 Q4 36.5 4 34 V6.5 Q4 4 6.5 4 H20.5 L26 8.5" stroke="#444" stroke-width="2.6" stroke-linejoin="round" stroke-linecap="round"/><path d="M14.5 7.4 H28.4 L39 19 V38.7 Q39 41.2 36.5 41.2 H14.5 Q12 41.2 12 38.7 V9.9 Q12 7.4 14.5 7.4 Z" fill="#f5f5f5" stroke="#444" stroke-width="2.6" stroke-linejoin="round"/><path d="M28.4 7.4 V16.5 Q28.4 19 31 19 H39" stroke="#444" stroke-width="2.6" stroke-linejoin="round"/><path d="M18.5 25.5 H25 M18.5 32.5 H30.7" stroke="#444" stroke-width="2.6" stroke-linecap="round"/></svg>
<div class="t" style="left:2742px;top:442.0px;font-size:35px;color:#333333;font-weight:400;">复制公式</div>
<div class="r" style="left:1504px;top:538px;width:1441px;height:73px;background:#eef6fd;"></div>
<div class="t" style="left:1519.4px;top:560.3px;font-size:35px;color:#c13fd1;font-weight:400;"><span class="n" style="transform:scaleX(0.82);margin-right:-15.40px;">LEFT</span>(</div>
<div class="r" style="left:1610px;top:542px;width:152px;height:66px;border-radius:33px;background:#e2eaf5;"></div>
<div class="t" style="left:1636px;top:559.6px;font-size:35px;color:#1e8ac8;font-weight:400;">出库员</div>
<div class="t" style="left:1770.8px;top:560.3px;font-size:35px;color:#c13fd1;font-weight:400;">,1)</div>
<div class="r" style="left:1504px;top:1290px;width:1441px;height:99px;background:#fdeeee;"></div>
<div class="r" style="left:1504px;top:1389px;width:1441px;height:2px;background:#e8e8e8;"></div>
<div class="t" style="left:1529px;top:1324.0px;font-size:35px;color:#e0443e;font-weight:400;">类型错误</div>
<div class="t" style="left:1529px;top:1424.0px;font-size:35px;color:#333333;font-weight:400;"><span class="n" style="transform:scaleX(0.82);margin-right:-15.40px;">LEFT</span></div>
<div class="t" style="left:1530px;top:1471.0px;font-size:35px;color:#333333;font-weight:400;">函数可以从一个文本的第一个字符开始返回指定个数的字符。</div>
<div class="t" style="left:1530px;top:1521.5px;font-size:35px;color:#333333;font-weight:400;">用法：<span class="n" style="transform:scaleX(0.82);margin-right:-15.40px;color:#c07ad8;">LEFT</span>(文本，文本长度)</div>
<div class="t" style="left:1530px;top:1572.0px;font-size:35px;color:#333333;font-weight:400;">示例：<span class="n" style="transform:scaleX(0.82);margin-right:-15.40px;color:#c07ad8;">LEFT</span>("英雄云企业数据管理平台",3)返回"英雄云"，也就是"英雄云企业数据管理平</div>
<div class="t" style="left:1530px;top:1621.0px;font-size:35px;color:#333333;font-weight:400;">台"的从左往右的前3个字符</div>
<div class="r" style="left:808px;top:1829px;width:2224px;height:2px;background:repeating-linear-gradient(90deg,#dcdcdc 0 10px,transparent 10px 18px);"></div>
<div class="r" style="left:2641px;top:1867px;width:146px;height:78px;border:2px solid #d9dde6;border-radius:12px;background:#fff;"></div>
<div class="t" style="left:2678px;top:1889.0px;font-size:35px;color:#1d1d1f;font-weight:400;-webkit-text-stroke:0.8px currentColor;">取消</div>
<div class="r" style="left:2818px;top:1867px;width:150px;height:78px;border-radius:12px;background:#1e88e5;"></div>
<div class="t" style="left:2857px;top:1889.0px;font-size:35px;color:#ffffff;font-weight:400;-webkit-text-stroke:1.4px currentColor;">确定</div>
<div class="r" style="left:1505px;top:517px;width:661px;height:129px;border:4px solid #fa9b2e;border-radius:16px;background:rgba(250,155,46,0.05);"></div>
<div class="r" style="left:1505px;top:1272px;width:542px;height:139px;border:4px solid #fa9b2e;border-radius:16px;background:rgba(250,155,46,0.05);"></div>
<div class="r" style="left:2195px;top:519px;width:88px;height:88px;border-radius:50%;background:#fb9b2f;"></div>
<svg class="r" style="left:2195px;top:519px;" width="90" height="90" viewBox="0 0 90 90" fill="none"><path d="M43.8 22.4 H50.4 V69.2 H43.8 V30.5 L33 35.2 V29.9 Z" fill="#fff"/></svg>
<div class="r" style="left:2074px;top:1276px;width:88px;height:88px;border-radius:50%;background:#fb9b2f;"></div>
<svg class="r" style="left:2074px;top:1276px;" width="90" height="90" viewBox="0 0 90 90" fill="none"><path d="M33.2 27.2 Q37.5 22.3 44.2 22.3 Q55.6 22.3 55.6 33.2 Q55.6 40.5 46.5 46.8 Q33.2 55.2 33.2 63.6 V65" stroke="#fff" stroke-width="6.2" stroke-linejoin="round"/><rect x="29.7" y="62" width="29" height="6.1" fill="#fff"/></svg>
</body></html>
